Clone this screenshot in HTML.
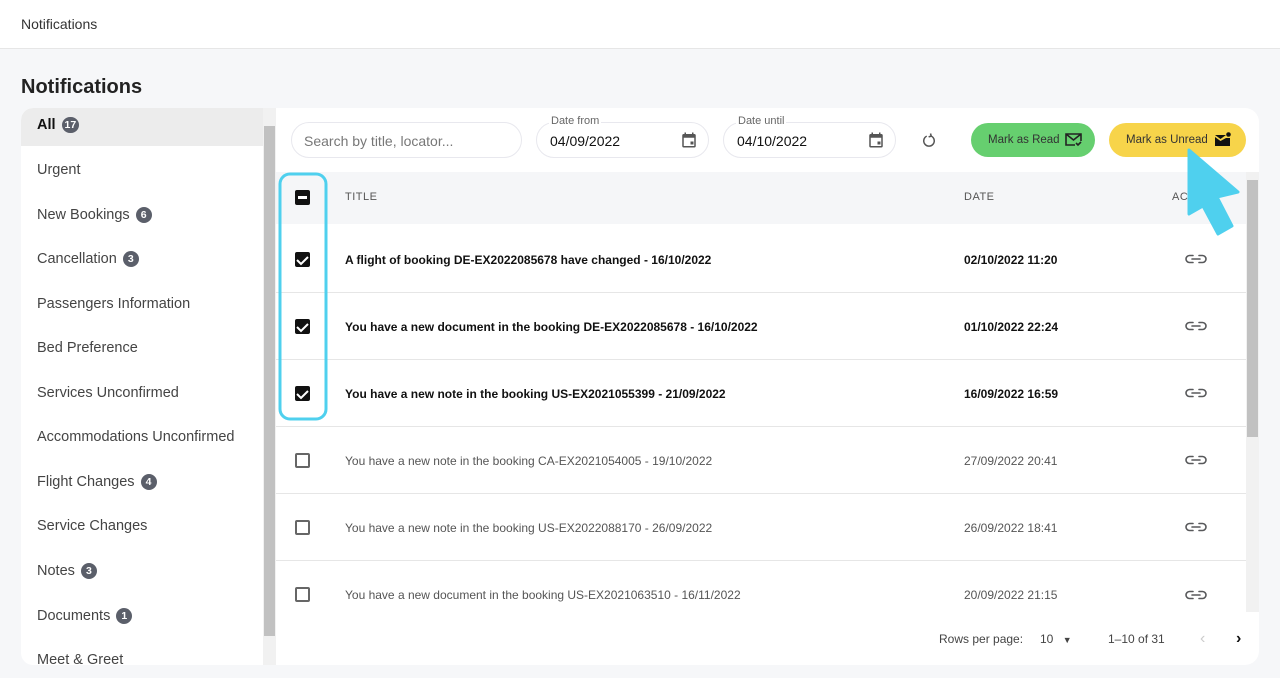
<!DOCTYPE html>
<html><head><meta charset="utf-8"><style>
*{box-sizing:border-box;margin:0;padding:0}
body{width:1280px;height:678px;overflow:hidden;background:#f6f7f9;font-family:"Liberation Sans",sans-serif;position:relative;color:#333}
.top{position:absolute;left:0;top:0;width:1280px;height:49px;background:#fff;border-bottom:1px solid #e6e6e6;font-size:14px;padding:16px 21px;color:#333}
h1{position:absolute;left:21px;top:76px;font-size:20px;font-weight:bold;color:#222}
.side{position:absolute;left:21px;top:108px;width:255px;height:557px;background:#fff;border-radius:12px 0 0 12px;overflow:hidden}
.side .it{position:absolute;left:0;width:242px;height:38px;font-size:14.5px;color:#444;padding-left:16px;line-height:34px}
.side .sel{background:#ececec;font-weight:bold;color:#111;border-top-left-radius:12px}
.b{display:inline-block;background:#5b5f6a;color:#fff;border-radius:9px;font-size:10.5px;font-weight:bold;min-width:16px;height:16px;line-height:16px;text-align:center;padding:0 3px;margin-left:6px;vertical-align:1px}
.sb{position:absolute;left:242px;top:0;width:13px;height:557px;background:#f1f1f1}
.sb i{position:absolute;left:1px;top:18px;width:11px;height:510px;background:#c1c1c1}
.main{position:absolute;left:276px;top:108px;width:983px;height:557px;background:#fff;border-radius:0 14px 14px 0;overflow:hidden}
.inp{position:absolute;top:14px;height:36px;border:1px solid #e8e8ee;border-radius:18px;font-size:14px}
.lbl{position:absolute;top:-8px;left:12px;background:#fff;font-size:11px;color:#666;padding:0 2px}
.btn{position:absolute;top:15px;height:34px;border-radius:17px;font-size:11.5px;color:#333;line-height:34px;padding-left:17px}
.thead{position:absolute;left:0;top:64px;width:970px;height:52px;background:#f5f6f8;font-size:11px;color:#555;letter-spacing:.5px}
.row{position:absolute;left:0;width:970px;height:67px;border-bottom:1px solid #e6e6e6;font-size:12px;color:#555}
.row.bold{font-weight:bold;color:#111}
.row span{position:absolute;top:27px}
.cb{position:absolute;left:19px;width:15px;height:15px;border-radius:2px}
.cb.on{background:#111}
.cb.off{border:2px solid #666}
.tsb{position:absolute;left:970px;top:64px;width:13px;height:440px;background:#f1f1f1}
.tsb i{position:absolute;left:1px;top:8px;width:11px;height:257px;background:#c1c1c1}
</style></head><body>
<div class="top">Notifications</div>
<h1>Notifications</h1>
<div class="side">
<div class="it sel" style="top:0;height:38px;line-height:34px">All<span class="b">17</span></div>
<div class="it" style="top:45px">Urgent</div>
<div class="it" style="top:90px">New Bookings<span class="b">6</span></div>
<div class="it" style="top:134px">Cancellation<span class="b">3</span></div>
<div class="it" style="top:179px">Passengers Information</div>
<div class="it" style="top:223px">Bed Preference</div>
<div class="it" style="top:268px">Services Unconfirmed</div>
<div class="it" style="top:312px">Accommodations Unconfirmed</div>
<div class="it" style="top:357px">Flight Changes<span class="b">4</span></div>
<div class="it" style="top:401px">Service Changes</div>
<div class="it" style="top:446px">Notes<span class="b">3</span></div>
<div class="it" style="top:491px">Documents<span class="b">1</span></div>
<div class="it" style="top:535px">Meet &amp; Greet</div>
<div class="sb"><i></i></div>
</div>
<div class="main">
<div class="inp" style="left:15px;width:231px;color:#777;padding:10px 12px">Search by title, locator...</div>
<div class="inp" style="left:260px;width:173px;padding:10px 13px;color:#111"><span class="lbl">Date from</span>04/09/2022
<svg style="position:absolute;right:10px;top:8px" width="18" height="18" viewBox="0 0 24 24"><path fill="#555" d="M19 4h-1V2h-2v2H8V2H6v2H5a2 2 0 0 0-2 2v14a2 2 0 0 0 2 2h14a2 2 0 0 0 2-2V6a2 2 0 0 0-2-2zm0 16H5V9h14zm-5-6h4v4h-4z"/></svg></div>
<div class="inp" style="left:447px;width:173px;padding:10px 13px;color:#111"><span class="lbl">Date until</span>04/10/2022
<svg style="position:absolute;right:10px;top:8px" width="18" height="18" viewBox="0 0 24 24"><path fill="#555" d="M19 4h-1V2h-2v2H8V2H6v2H5a2 2 0 0 0-2 2v14a2 2 0 0 0 2 2h14a2 2 0 0 0 2-2V6a2 2 0 0 0-2-2zm0 16H5V9h14zm-5-6h4v4h-4z"/></svg></div>
<svg style="position:absolute;left:644px;top:24px" width="18" height="18" viewBox="0 0 24 24"><path fill="none" stroke="#555" stroke-width="2" d="M9 5.5A7 7 0 1 0 15 5.5M15 5.5l-1-3.5M15 5.5l-3.5 1"/></svg>
<div class="btn" style="left:695px;width:124px;background:#66cf6f">Mark as Read
<svg style="position:absolute;left:94px;top:10px" width="17" height="14" viewBox="0 0 17 14"><path fill="none" stroke="#222" stroke-width="1.6" d="M10 12H1V1h15v7M1 1l7.5 6L16 1M11 10l2 2 3-3"/></svg></div>
<div class="btn" style="left:833px;width:137px;background:#f7d44a">Mark as Unread
<svg style="position:absolute;left:105px;top:9px" width="17" height="15" viewBox="0 0 17 15"><path fill="#111" d="M1 3h11v0L6.5 7 1 3v11h15V6H12L6.5 9 1 5z"/><circle cx="14.5" cy="2.5" r="2.3" fill="#111"/></svg></div>
<div class="thead"><div class="cb on" style="top:18px"><div style="position:absolute;left:3px;top:6px;width:9px;height:3px;background:#fff"></div></div>
<span style="position:absolute;left:69px;top:19px">TITLE</span><span style="position:absolute;left:688px;top:19px">DATE</span><span style="position:absolute;left:896px;top:19px">AC</span></div>
<div class="row bold" style="top:118px"><div class="cb on" style="top:26px"></div><span style="left:69px">A flight of booking DE-EX2022085678 have changed - 16/10/2022</span><span style="left:688px">02/10/2022 11:20</span></div>
<div class="row bold" style="top:185px"><div class="cb on" style="top:26px"></div><span style="left:69px">You have a new document in the booking DE-EX2022085678 - 16/10/2022</span><span style="left:688px">01/10/2022 22:24</span></div>
<div class="row bold" style="top:252px"><div class="cb on" style="top:26px"></div><span style="left:69px">You have a new note in the booking US-EX2021055399 - 21/09/2022</span><span style="left:688px">16/09/2022 16:59</span></div>
<div class="row" style="top:319px"><div class="cb off" style="top:26px"></div><span style="left:69px">You have a new note in the booking CA-EX2021054005 - 19/10/2022</span><span style="left:688px">27/09/2022 20:41</span></div>
<div class="row" style="top:386px"><div class="cb off" style="top:26px"></div><span style="left:69px">You have a new note in the booking US-EX2022088170 - 26/09/2022</span><span style="left:688px">26/09/2022 18:41</span></div>
<div class="row" style="top:453px;border:none"><div class="cb off" style="top:26px"></div><span style="left:69px">You have a new document in the booking US-EX2021063510 - 16/11/2022</span><span style="left:688px">20/09/2022 21:15</span></div>
<div class="tsb"><i></i></div>
<div style="position:absolute;left:663px;top:524px;font-size:12px;color:#444">Rows per page:</div>
<div style="position:absolute;left:764px;top:524px;font-size:12px;color:#444">10 <span style="font-size:9px;margin-left:6px">▼</span></div>
<div style="position:absolute;left:832px;top:524px;font-size:12px;color:#444">1–10 of 31</div>
<div style="position:absolute;left:924px;top:522px;font-size:16px;color:#ccc">‹</div>
<div style="position:absolute;left:960px;top:522px;font-size:16px;color:#111;font-weight:bold">›</div>
</div>
<svg style="position:absolute;left:0;top:0" width="1280" height="678">
<g fill="none" stroke="#58595b" stroke-width="1.6" stroke-linecap="round">
<path d="M1193 255.5h-3.5a3.5 3.5 0 0 0 0 7h3.5M1199 255.5h3.5a3.5 3.5 0 0 1 0 7h-3.5M1192 259h8"/>
<path d="M1193 322.5h-3.5a3.5 3.5 0 0 0 0 7h3.5M1199 322.5h3.5a3.5 3.5 0 0 1 0 7h-3.5M1192 326h8"/>
<path d="M1193 389.5h-3.5a3.5 3.5 0 0 0 0 7h3.5M1199 389.5h3.5a3.5 3.5 0 0 1 0 7h-3.5M1192 393h8"/>
<path d="M1193 456.5h-3.5a3.5 3.5 0 0 0 0 7h3.5M1199 456.5h3.5a3.5 3.5 0 0 1 0 7h-3.5M1192 460h8"/>
<path d="M1193 523.5h-3.5a3.5 3.5 0 0 0 0 7h3.5M1199 523.5h3.5a3.5 3.5 0 0 1 0 7h-3.5M1192 527h8"/>
<path d="M1193 591.5h-3.5a3.5 3.5 0 0 0 0 7h3.5M1199 591.5h3.5a3.5 3.5 0 0 1 0 7h-3.5M1192 595h8"/>
</g>
<g fill="none" stroke="#fff" stroke-width="2"><path d="M297 260l4 4 7-7M297 327l4 4 7-7M297 394l4 4 7-7"/></g>
<rect x="280" y="174" width="46" height="245" rx="10" fill="none" stroke="#4fd0ee" stroke-width="3"/>
<polygon points="1189,150 1238,192 1217,197 1232,226 1218,234 1203,206 1189,214" fill="#4fd0ee" stroke="#4fd0ee" stroke-width="3" stroke-linejoin="round"/>
</svg>
</body></html>
